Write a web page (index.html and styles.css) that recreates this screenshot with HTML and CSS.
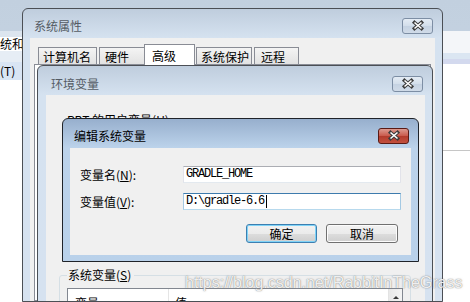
FILE: index.html
```html
<!DOCTYPE html>
<html>
<head>
  <meta charset="utf-8">
  <title>编辑系统变量</title>
  <link rel="stylesheet" href="styles.css">
</head>
<body>
  <div class="back back-left">
    <div class="back-top"></div>
    <div class="back-lite"></div>
    <div class="back-field"><span class="back-text">系统和安全</span></div>
    <div class="back-gap"></div>
    <div class="back-sel"><span>(T)</span></div>
    <div class="back-rest"></div>
  </div>

  <div class="back back-right">
    <div class="br-top"></div>
    <div class="br-lite"></div>
    <div class="br-blue"></div>
    <div class="br-lav"></div>
    <div class="br-white"></div>
    <div class="br-rest"></div>
  </div>

  <div class="win win-sys">
    <div class="titlebar">
      <span class="title">系统属性</span>
      <span class="close">
        <svg width="29" height="14" viewBox="0 0 29 14"><path class="x-out" d="M11.5 3.5L18.5 9.5M18.5 3.5L11.5 9.5"/><path class="x-in" d="M11.5 3.5L18.5 9.5M18.5 3.5L11.5 9.5"/></svg>
      </span>
    </div>
    <div class="client sys-client">
      <div class="tabs">
        <span class="tab tab-1">计算机名</span>
        <span class="tab tab-2">硬件</span>
        <span class="tab tab-3 selected">高级</span>
        <span class="tab tab-4">系统保护</span>
        <span class="tab tab-5">远程</span>
      </div>
      <div class="tab-page"></div>
    </div>
  </div>

  <div class="win win-env">
    <div class="titlebar">
      <span class="title">环境变量</span>
      <span class="close">
        <svg width="29" height="14" viewBox="0 0 29 14"><path class="x-out" d="M11.5 3.5L18.5 9.5M18.5 3.5L11.5 9.5"/><path class="x-in" d="M11.5 3.5L18.5 9.5M18.5 3.5L11.5 9.5"/></svg>
      </span>
    </div>
    <div class="client env-client">
      <div class="user-label">RBT 的用户变量(<u>U</u>)</div>
      <fieldset class="group">
        <legend>系统变量(<u>S</u>)</legend>
        <div class="listview">
          <div class="lv-main">
            <div class="lv-head">
              <span class="lv-col lv-name">变量</span>
              <span class="lv-col lv-value">值</span>
            </div>
          </div>
          <div class="lv-scroll"><span class="arrow-up"></span></div>
        </div>
      </fieldset>
    </div>
  </div>

  <div class="win win-edit">
    <div class="titlebar">
      <span class="title">编辑系统变量</span>
      <span class="close close-red">
        <svg width="29" height="14" viewBox="0 0 29 14"><path class="x-out" d="M11.5 3.5L18.5 9.5M18.5 3.5L11.5 9.5"/><path class="x-in" d="M11.5 3.5L18.5 9.5M18.5 3.5L11.5 9.5"/></svg>
      </span>
    </div>
    <div class="client edit-client">
      <div class="field-row">
        <span class="field-label">变量名(<u>N</u>):</span>
        <span class="textbox">GRADLE_HOME</span>
      </div>
      <div class="field-row">
        <span class="field-label">变量值(<u>V</u>):</span>
        <span class="textbox focused">D:\gradle-6.6<span class="caret"></span></span>
      </div>
      <div class="button-row">
        <span class="btn btn-default">确定</span>
        <span class="btn">取消</span>
      </div>
    </div>
  </div>

  <div class="watermark">https://blog.csdn.net/RabbitInTheGrass</div>
</body>
</html>
```

FILE: styles.css
```css
body {
  margin: 0;
  width: 470px;
  height: 302px;
  overflow: hidden;
  position: relative;
  background: linear-gradient(#c2d0df, #cddaea);
  font-family: "Noto Sans CJK SC", sans-serif;
  font-size: 12px;
  line-height: 14px;
  color: #000;
}

u {
  text-decoration: underline;
}

/* windows behind the dialogs */
.back {
  position: absolute;
  top: 0;
  height: 302px;
  display: flex;
  flex-direction: column;
  overflow: hidden;
}

.back-left {
  left: 0;
  width: 22px;
}

.back-top { height: 31px; }
.back-lite { height: 6px; background: #dce5ef; }

.back-field {
  height: 14px;
  background: #fff;
  white-space: nowrap;
}

.back-text {
  margin-left: -12px;
}

.back-gap { height: 11px; background: #e6edf5; }

.back-sel {
  height: 18px;
  background: #d9e5f4;
  line-height: 18px;
  white-space: nowrap;
}

.back-rest { flex: 1; background: #fff; }

.back-right {
  left: 443px;
  width: 27px;
}

.br-top { height: 31px; }
.br-lite { height: 22px; background: #f4f6f9; }
.br-blue { height: 6px; background: #dbe6f2; }
.br-lav { height: 5px; background: #d3d9ee; }
.br-white { height: 86px; background: #fff; border-bottom: 1px solid #c6c6c6; }
.br-rest { flex: 1; background: #fff; }

/* window frames */
.win {
  position: absolute;
  box-sizing: border-box;
  border: 1px solid #4b4f55;
  border-radius: 6px 6px 0 0;
  display: flex;
  flex-direction: column;
  background: linear-gradient(#bfcddd 0, #d5e2f0 29px, #d6e2f0 100%);
}

.titlebar {
  display: flex;
  justify-content: space-between;
  align-items: flex-start;
  height: 29px;
  box-sizing: border-box;
}

.title {
  line-height: 16px;
  color: #545b64;
}

.close {
  width: 31px;
  height: 16px;
  box-sizing: border-box;
  border: 1px solid #7d8ea4;
  border-radius: 3px;
  background: linear-gradient(#e4ecf5, #d3deea 50%, #c5d2e2 50%, #d0dbe8);
  display: flex;
}

.x-out {
  fill: none;
  stroke: #3d3d3d;
  stroke-width: 3.6;
  stroke-linecap: square;
}

.x-in {
  fill: none;
  stroke: #fff;
  stroke-width: 1.6;
}

.client {
  flex: 1;
  background: #f0f0f0;
}

/* 系统属性 */
.win-sys {
  left: 22px;
  top: 8px;
  width: 421px;
  height: 294px;
  padding: 0 7px;
}

.win-sys .titlebar {
  padding: 9px 2px 0 4px;
}

.sys-client {
  display: flex;
  flex-direction: column;
}

.tabs {
  display: flex;
  align-items: flex-end;
  padding: 6px 0 0 8px;
}

.tab {
  box-sizing: border-box;
  height: 17px;
  padding: 1px 0 0 5px;
  border: 1px solid #898c95;
  border-bottom: none;
  background: linear-gradient(#f4f4f4, #e2e2e2);
  line-height: 15px;
  white-space: nowrap;
}

.tab-1 { width: 59px; padding-left: 4px; }
.tab-2 { width: 47px; margin-left: 2px; }
.tab-3 { width: 51px; margin-left: -2px; padding-left: 7px; }
.tab-4 { width: 56px; margin-left: 1px; padding-left: 4px; }
.tab-5 { width: 45px; margin-left: 2px; padding-left: 6px; }

.tab.selected {
  height: 21px;
  margin-bottom: -1px;
  background: #fff;
  position: relative;
  padding-top: 3px;
}

.tab-page {
  flex: 1;
  margin: 0 4px;
  border: 1px solid #898c95;
  background: #fff;
}

/* 环境变量 */
.win-env {
  left: 37px;
  top: 65px;
  width: 396px;
  height: 237px;
  padding: 0 7px 0 8px;
}

.win-env .titlebar {
  padding: 10px 2px 0 5px;
}

.env-client {
  padding: 0 14px 0 13px;
  overflow: hidden;
}

.user-label {
  margin: 18px 0 0 8px;
}

.group {
  margin: 141px 0 0;
  padding: 0 7px;
  min-width: 0;
  border: 1px solid #d5dfe5;
  border-radius: 3px;
}

.group legend {
  padding: 0 3px 0 1px;
  line-height: 14px;
}

.listview {
  margin-top: 6px;
  height: 60px;
  border: 1px solid #828790;
  background: #fff;
  display: flex;
}

.lv-main {
  flex: 1;
}

.lv-head {
  display: flex;
  height: 24px;
  border-bottom: 1px solid #e5e5e5;
}

.lv-col {
  padding: 7px 0 0 7px;
}

.lv-name {
  width: 93px;
  border-right: 1px solid #e5e5e5;
}

.lv-value {
  padding-left: 6px;
}

.lv-scroll {
  width: 13px;
  background: linear-gradient(90deg, #e9e9e9, #f4f4f4);
  border-left: 1px solid #e3e3e3;
  display: flex;
  justify-content: center;
}

.arrow-up {
  margin-top: 7px;
  width: 0;
  height: 0;
  border-left: 3px solid transparent;
  border-right: 3px solid transparent;
  border-bottom: 3px solid #3a3a3a;
}

/* 编辑系统变量 */
.win-edit {
  left: 62px;
  top: 118px;
  width: 357px;
  height: 144px;
  padding: 0 7px 6px;
  border-color: #1f2329;
  background: linear-gradient(#97afcd 0, #bcd3eb 29px, #b9d1ea 100%);
}

.win-edit .titlebar {
  padding: 9px 2px 0 4px;
}

.win-edit .title {
  color: #000;
}

.close-red {
  border-color: #5a1b15;
  background: linear-gradient(#dc9a8f, #c9584a 50%, #b23a2b 50%, #c3513f);
}

.edit-client {
  padding: 18px 10px 0;
  display: flex;
  flex-direction: column;
  gap: 10px;
}

.field-row {
  display: flex;
  align-items: center;
}

.field-label {
  width: 103px;
  white-space: nowrap;
}

.textbox {
  box-sizing: border-box;
  width: 218px;
  height: 17px;
  padding: 0 0 0 2px;
  border: 1px solid #e2e3ea;
  border-top-color: #abadb3;
  border-bottom-color: #e3e9ef;
  background: #fff;
  font-family: "Liberation Mono", monospace;
  font-size: 12px;
  letter-spacing: -1.2px;
  line-height: 15px;
  display: flex;
  align-items: center;
}

.textbox.focused {
  border-color: #a4c9e3;
  border-top-color: #3d7bad;
  border-bottom-color: #b7d9ed;
}

.caret {
  width: 1px;
  height: 13px;
  margin-left: 2px;
  background: #000;
}

.button-row {
  display: flex;
  justify-content: flex-end;
  gap: 9px;
  margin-top: 4px;
  padding-right: 3px;
}

.btn {
  box-sizing: border-box;
  width: 72px;
  height: 19px;
  border: 1px solid #707070;
  border-radius: 3px;
  background: linear-gradient(#f2f2f2, #ebebeb 50%, #dddddd 50%, #cfcfcf);
  box-shadow: inset 0 0 0 1px #fcfcfc;
  text-align: center;
  line-height: 17px;
}

.btn-default {
  width: 71px;
  border-color: #3c7fb1;
  box-shadow: inset 0 0 0 1px #7fd3f7;
}

.watermark {
  position: absolute;
  left: 185px;
  top: 274px;
  font-family: "Liberation Sans", Arial, sans-serif;
  font-size: 16px;
  line-height: 18px;
  color: rgba(255, 255, 255, 0.9);
  text-shadow: 0 0 1px rgba(90, 90, 90, 0.8), 0 0 2px rgba(150, 150, 150, 0.5);
  white-space: nowrap;
}
```
